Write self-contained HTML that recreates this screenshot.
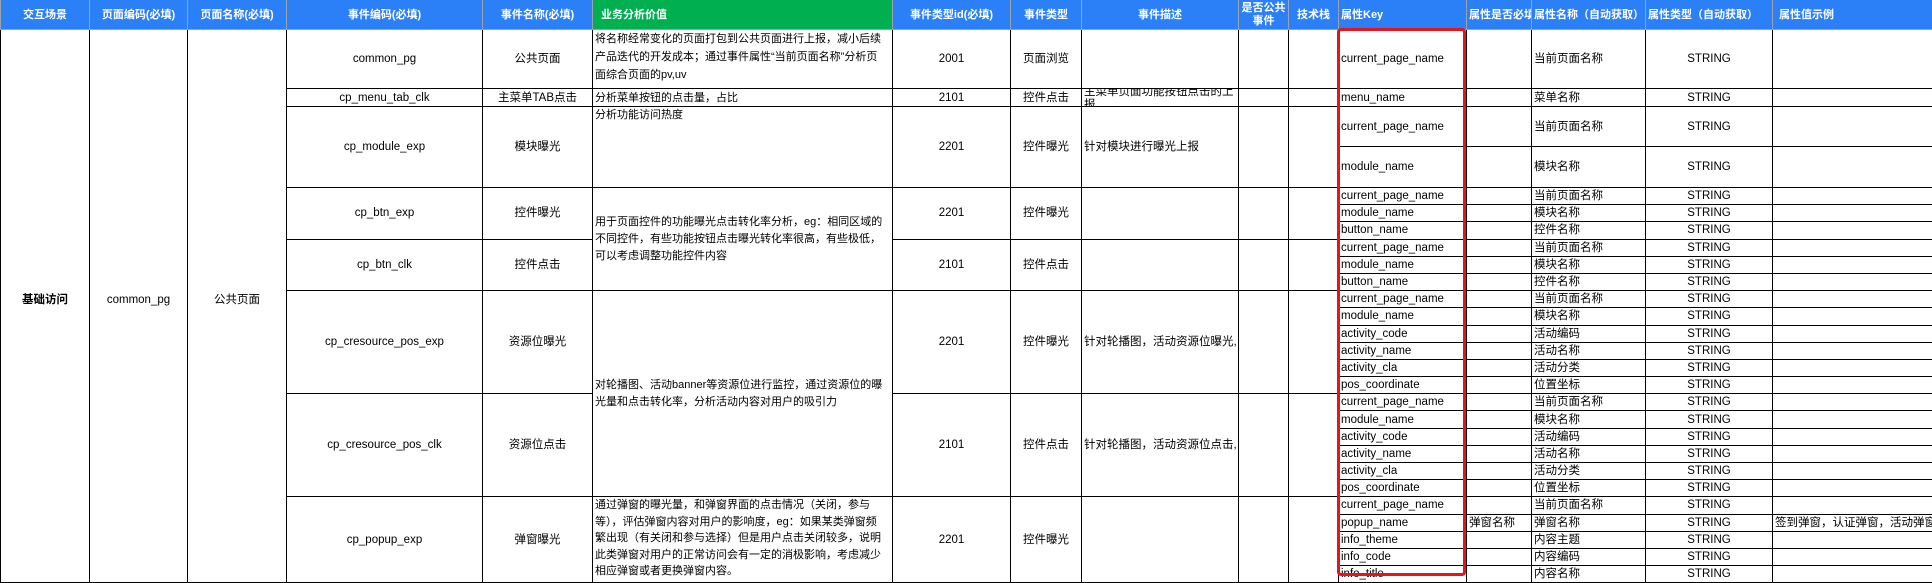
<!DOCTYPE html>
<html><head><meta charset="utf-8">
<style>
html,body{margin:0;padding:0;background:#fff;}
body{width:1932px;height:581px;overflow:hidden;position:relative;font-family:"Liberation Sans","Noto Sans CJK SC",sans-serif;}
table{border-collapse:collapse;table-layout:fixed;position:absolute;left:0;top:0;width:1932px;}
td,th{border:1px solid #000;font-size:11.5px;color:#000;padding:0 2px;overflow:hidden;white-space:nowrap;text-align:center;vertical-align:middle;font-weight:normal;line-height:14px;}
th{background:#2b7ff7;color:#fff;font-weight:bold;border:1px solid #9aa3ad;border-top:none;height:29px;font-size:11px;}
th.g{background:#00b050;}
th.l{text-align:left;}
td.l{text-align:left;}
td.wrap{white-space:normal;}
td.bv{font-size:11px;padding-right:6px;}
.red{position:absolute;left:1337px;top:28px;width:123px;height:542px;border:3px solid #e8141c;border-radius:4px;}
</style></head><body>
<table>
<colgroup>
<col style="width:89px"><col style="width:98px"><col style="width:99px"><col style="width:196px"><col style="width:110px"><col style="width:300px"><col style="width:118px"><col style="width:71px"><col style="width:157px"><col style="width:50px"><col style="width:50px"><col style="width:128px"><col style="width:65px"><col style="width:114px"><col style="width:127px"><col style="width:160px">
</colgroup>
<tr><th>交互场景</th><th>页面编码(必填)</th><th>页面名称(必填)</th><th>事件编码(必填)</th><th>事件名称(必填)</th><th class="g l" style="padding-left:8px">业务分析价值</th><th>事件类型id(必填)</th><th>事件类型</th><th>事件描述</th><th style="white-space:normal;line-height:13px">是否公共事件</th><th>技术栈</th><th class="l">属性Key</th><th class="l">属性是否必填</th><th class="l">属性名称（自动获取）</th><th class="l">属性类型（自动获取）</th><th class="l" style="padding-left:6px">属性值示例</th></tr>
<tr style="height:59px">
<td rowspan="27" style="vertical-align:top;padding-top:263px;font-weight:bold">基础访问</td>
<td rowspan="27" style="vertical-align:top;padding-top:263px">common_pg</td>
<td rowspan="27" style="vertical-align:top;padding-top:263px">公共页面</td>
<td>common_pg</td><td>公共页面</td>
<td class="l wrap bv" style="vertical-align:top;line-height:18px;padding-top:0">将名称经常变化的页面打包到公共页面进行上报，减小后续产品迭代的开发成本；通过事件属性“当前页面名称”分析页面综合页面的pv,uv</td>
<td>2001</td><td>页面浏览</td><td></td><td></td><td></td><td class="l">current_page_name</td><td></td><td class="l">当前页面名称</td><td>STRING</td><td></td></tr>
<tr style="height:18px"><td>cp_menu_tab_clk</td><td>主菜单TAB点击</td><td class="l bv">分析菜单按钮的点击量，占比</td><td>2101</td><td>控件点击</td><td class="l wrap" style="line-height:13px"><div style="height:16px;margin-top:-8px">主菜单页面功能按钮点击的上报</div></td><td></td><td></td><td class="l">menu_name</td><td></td><td class="l">菜单名称</td><td>STRING</td><td></td></tr>
<tr style="height:40px"><td rowspan="2">cp_module_exp</td><td rowspan="2">模块曝光</td><td rowspan="2" class="l bv" style="vertical-align:top;padding-top:1px">分析功能访问热度</td><td rowspan="2">2201</td><td rowspan="2">控件曝光</td><td rowspan="2" class="l">针对模块进行曝光上报</td><td rowspan="2"></td><td rowspan="2"></td><td class="l">current_page_name</td><td></td><td class="l">当前页面名称</td><td>STRING</td><td></td></tr>
<tr style="height:41px"><td class="l">module_name</td><td></td><td class="l">模块名称</td><td>STRING</td><td></td></tr>
<tr style="height:17.2px"><td rowspan="3">cp_btn_exp</td><td rowspan="3">控件曝光</td><td rowspan="6" class="l wrap bv" style="line-height:17px">用于页面控件的功能曝光点击转化率分析，eg：相同区域的不同控件，有些功能按钮点击曝光转化率很高，有些极低，可以考虑调整功能控件内容</td><td rowspan="3">2201</td><td rowspan="3">控件曝光</td><td rowspan="3"></td><td rowspan="3"></td><td rowspan="3"></td><td class="l">current_page_name</td><td></td><td class="l">当前页面名称</td><td>STRING</td><td></td></tr>
<tr style="height:17.2px"><td class="l">module_name</td><td></td><td class="l">模块名称</td><td>STRING</td><td></td></tr>
<tr style="height:17.2px"><td class="l">button_name</td><td></td><td class="l">控件名称</td><td>STRING</td><td></td></tr>
<tr style="height:17.2px"><td rowspan="3">cp_btn_clk</td><td rowspan="3">控件点击</td><td rowspan="3">2101</td><td rowspan="3">控件点击</td><td rowspan="3"></td><td rowspan="3"></td><td rowspan="3"></td><td class="l">current_page_name</td><td></td><td class="l">当前页面名称</td><td>STRING</td><td></td></tr>
<tr style="height:17.2px"><td class="l">module_name</td><td></td><td class="l">模块名称</td><td>STRING</td><td></td></tr>
<tr style="height:17.2px"><td class="l">button_name</td><td></td><td class="l">控件名称</td><td>STRING</td><td></td></tr>
<tr style="height:17.2px"><td rowspan="6">cp_cresource_pos_exp</td><td rowspan="6">资源位曝光</td><td rowspan="12" class="l wrap bv" style="line-height:17px">对轮播图、活动banner等资源位进行监控，通过资源位的曝光量和点击转化率，分析活动内容对用户的吸引力</td><td rowspan="6">2201</td><td rowspan="6">控件曝光</td><td rowspan="6" class="l">针对轮播图，活动资源位曝光,</td><td rowspan="6"></td><td rowspan="6"></td><td class="l">current_page_name</td><td></td><td class="l">当前页面名称</td><td>STRING</td><td></td></tr>
<tr style="height:17.2px"><td class="l">module_name</td><td></td><td class="l">模块名称</td><td>STRING</td><td></td></tr>
<tr style="height:17.2px"><td class="l">activity_code</td><td></td><td class="l">活动编码</td><td>STRING</td><td></td></tr>
<tr style="height:17.2px"><td class="l">activity_name</td><td></td><td class="l">活动名称</td><td>STRING</td><td></td></tr>
<tr style="height:17.2px"><td class="l">activity_cla</td><td></td><td class="l">活动分类</td><td>STRING</td><td></td></tr>
<tr style="height:17.2px"><td class="l">pos_coordinate</td><td></td><td class="l">位置坐标</td><td>STRING</td><td></td></tr>
<tr style="height:17.2px"><td rowspan="6">cp_cresource_pos_clk</td><td rowspan="6">资源位点击</td><td rowspan="6">2101</td><td rowspan="6">控件点击</td><td rowspan="6" class="l">针对轮播图，活动资源位点击,</td><td rowspan="6"></td><td rowspan="6"></td><td class="l">current_page_name</td><td></td><td class="l">当前页面名称</td><td>STRING</td><td></td></tr>
<tr style="height:17.2px"><td class="l">module_name</td><td></td><td class="l">模块名称</td><td>STRING</td><td></td></tr>
<tr style="height:17.2px"><td class="l">activity_code</td><td></td><td class="l">活动编码</td><td>STRING</td><td></td></tr>
<tr style="height:17.2px"><td class="l">activity_name</td><td></td><td class="l">活动名称</td><td>STRING</td><td></td></tr>
<tr style="height:17.2px"><td class="l">activity_cla</td><td></td><td class="l">活动分类</td><td>STRING</td><td></td></tr>
<tr style="height:17.2px"><td class="l">pos_coordinate</td><td></td><td class="l">位置坐标</td><td>STRING</td><td></td></tr>
<tr style="height:17.2px"><td rowspan="5">cp_popup_exp</td><td rowspan="5">弹窗曝光</td><td rowspan="5" class="l wrap bv" style="vertical-align:top;line-height:16.5px">通过弹窗的曝光量，和弹窗界面的点击情况（关闭，参与等），评估弹窗内容对用户的影响度，eg：如果某类弹窗频繁出现（有关闭和参与选择）但是用户点击关闭较多，说明此类弹窗对用户的正常访问会有一定的消极影响，考虑减少相应弹窗或者更换弹窗内容。</td><td rowspan="5">2201</td><td rowspan="5">控件曝光</td><td rowspan="5"></td><td rowspan="5"></td><td rowspan="5"></td><td class="l">current_page_name</td><td></td><td class="l">当前页面名称</td><td>STRING</td><td></td></tr>
<tr style="height:17.2px"><td class="l">popup_name</td><td class="l">弹窗名称</td><td class="l">弹窗名称</td><td>STRING</td><td class="l">签到弹窗，认证弹窗，活动弹窗</td></tr>
<tr style="height:17.2px"><td class="l">info_theme</td><td></td><td class="l">内容主题</td><td>STRING</td><td></td></tr>
<tr style="height:17.2px"><td class="l">info_code</td><td></td><td class="l">内容编码</td><td>STRING</td><td></td></tr>
<tr style="height:17.2px"><td class="l">info_title</td><td></td><td class="l">内容名称</td><td>STRING</td><td></td></tr>
</table>
<div class="red"></div>
</body></html>
